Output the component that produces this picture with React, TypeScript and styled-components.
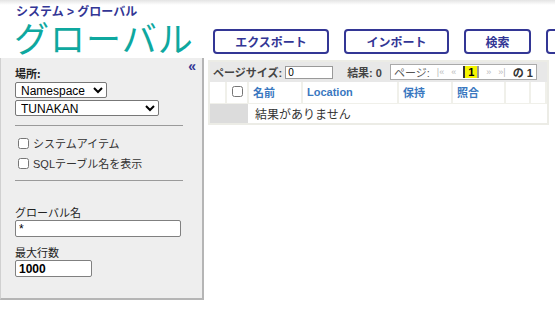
import React from 'react';
import styled, { createGlobalStyle } from 'styled-components';

const GlobalStyle = createGlobalStyle`
  html, body {
    margin: 0;
    padding: 0;
    background: #ffffff;
    font-family: "Liberation Sans", Arial, "Noto Sans CJK JP", sans-serif;
    overflow: hidden;
  }
`;

const navy = '#333695';

const Page = styled.div`
  width: 555px;
  height: 316px;
  position: relative;
  overflow: hidden;
`;

const Header = styled.div`
  height: 58px;
  display: flex;
  align-items: flex-start;
  background: linear-gradient(#e4e4e4 0px, #ffffff 5px);
  white-space: nowrap;
`;

const TitleBlock = styled.div`
  padding-left: 16px;
  width: 197px;
  flex-shrink: 0;
`;

const Crumb = styled.div`
  font-size: 12px;
  font-weight: bold;
  color: ${navy};
  line-height: 14px;
  margin-top: 5px;
`;

const Title = styled.h1`
  margin: 2px 0 0 -2px;
  font-size: 35px;
  font-weight: normal;
  line-height: 38px;
  color: #0ea89f;
  letter-spacing: 1px;
`;

const Buttons = styled.div`
  display: flex;
  gap: 15px;
  margin-top: 29px;
  flex-shrink: 0;
`;

const Btn = styled.button<{ w: number }>`
  width: ${(p) => p.w}px;
  height: 25px;
  border: 2px solid ${navy};
  border-radius: 4px;
  background: #fff;
  color: ${navy};
  font-family: "Liberation Sans", "Noto Sans CJK JP", sans-serif;
  font-size: 12px;
  font-weight: bold;
  padding: 0;
  flex-shrink: 0;
`;

const Main = styled.div`
  display: flex;
  align-items: flex-start;
`;

const Side = styled.div`
  width: 204px;
  height: 242px;
  box-sizing: border-box;
  background: #eeeeee;
  border-right: 2px solid #b5b5b5;
  border-bottom: 2px solid #b5b5b5;
  border-left: 1px solid #d0d0d0;
  padding: 9px 0 0 14px;
  position: relative;
  flex-shrink: 0;
`;

const Collapse = styled.span`
  position: absolute;
  right: 6px;
  top: 0px;
  font-size: 14px;
  font-weight: bold;
  color: ${navy};
`;

const Label = styled.div<{ bold?: boolean }>`
  font-size: 11px;
  font-weight: ${(p) => (p.bold ? 'bold' : 'normal')};
  color: #222;
  line-height: 13px;
  font-family: "Noto Sans CJK JP", sans-serif;
`;

const Select = styled.select<{ w: number }>`
  display: block;
  width: ${(p) => p.w}px;
  height: 16px;
  font-size: 12px;
  font-family: "Liberation Sans", Arial, sans-serif;
  border: 1px solid #777;
  border-radius: 2px;
  background: #fff;
  padding: 0 0 0 1px;
  margin-top: 2px;
  color: #000;
`;

const Rule = styled.div`
  width: 168px;
  height: 1px;
  background: #9a9a9a;
`;

const CheckRow = styled.label`
  display: flex;
  align-items: center;
  gap: 2px;
  font-size: 11px;
  color: #333;
  font-family: "Liberation Sans", "Noto Sans CJK JP", sans-serif;
  height: 20px;
`;

const Box = styled.input`
  width: 11px;
  height: 11px;
  margin: 0 2px 0 3px;
`;

const TextInput = styled.input<{ w: number; bold?: boolean }>`
  display: block;
  box-sizing: border-box;
  width: ${(p) => p.w}px;
  height: 17px;
  border: 1px solid #808080;
  border-radius: 2px;
  font-size: 12px;
  font-family: "Liberation Sans", Arial, sans-serif;
  font-weight: ${(p) => (p.bold ? 'bold' : 'normal')};
  padding: 0 3px;
  margin-top: 1px;
  background: #fff;
`;

const Content = styled.div`
  margin: 2px 0 0 4px;
  width: 341px;
  border: 2px solid #ecece6;
  box-sizing: border-box;
`;

const Toolbar = styled.div`
  height: 20px;
  background: #e8e8e8;
  display: flex;
  align-items: center;
  font-size: 11px;
  font-weight: bold;
  color: #444;
  font-family: "Liberation Sans", "Noto Sans CJK JP", sans-serif;
  padding-left: 3px;
  white-space: nowrap;
`;

const SmallInput = styled.input`
  width: 48px;
  height: 13px;
  box-sizing: border-box;
  border: 1px solid #999;
  font-size: 10px;
  padding: 0 2px;
  margin: 0 14px 0 3px;
`;

const Pager = styled.div`
  display: flex;
  align-items: center;
  gap: 7px;
  background: #fff;
  border: 1px solid #aaa;
  height: 14px;
  padding: 0 3px 0 3px;
  margin-left: 8px;
  font-weight: normal;
  color: #555;
`;

const PagerNav = styled.span<{ dim?: boolean }>`
  color: ${(p) => (p.dim ? '#bbb' : '#444')};
  font-size: 9px;
`;

const Current = styled.span`
  background: #f5f500;
  border-left: 2px solid #333;
  border-right: 2px solid #999;
  padding: 0 3px;
  font-weight: bold;
  color: #000;
  line-height: 12px;
`;

const Table = styled.table`
  border-collapse: collapse;
  table-layout: fixed;
  width: 100%;
  font-family: "Liberation Sans", "Noto Sans CJK JP", sans-serif;
  font-size: 11px;
`;

const Th = styled.th<{ w?: number; pad?: number }>`
  height: 21px;
  text-align: left;
  padding: 0 0 0 ${(p) => p.pad ?? 4}px;
  width: ${(p) => (p.w ? `${p.w}px` : 'auto')};
  color: #3a78c0;
  font-weight: bold;
  border-right: 2px solid #f0f0ea;
  border-bottom: 1px solid #f0f0ea;
  box-sizing: border-box;
`;

const Td = styled.td<{ gray?: boolean }>`
  height: 19px;
  padding: 0 7px;
  background: ${(p) => (p.gray ? '#dcdcdc' : '#fff')};
  color: #333;
  font-size: 12px;
`;

export default function App() {
  return (
    <Page>
      <GlobalStyle />
      <Header>
        <TitleBlock>
          <Crumb>システム &gt; グローバル</Crumb>
          <Title>グローバル</Title>
        </TitleBlock>
        <Buttons>
          <Btn w={116}>エクスポート</Btn>
          <Btn w={105}>インポート</Btn>
          <Btn w={67}>検索</Btn>
          <Btn w={60} aria-label="more" />
        </Buttons>
      </Header>
      <Main>
        <Side>
          <Collapse>«</Collapse>
          <Label bold>場所:</Label>
          <Select w={92}>
            <option>Namespace</option>
          </Select>
          <Select w={144}>
            <option>TUNAKAN</option>
          </Select>
          <div style={{ height: 9 }} />
          <Rule />
          <div style={{ height: 7 }} />
          <CheckRow>
            <Box type="checkbox" />
            システムアイテム
          </CheckRow>
          <CheckRow>
            <Box type="checkbox" />
            SQLテーブル名を表示
          </CheckRow>
          <div style={{ height: 7 }} />
          <Rule />
          <div style={{ height: 25 }} />
          <Label>グローバル名</Label>
          <TextInput w={166} defaultValue="*" />
          <div style={{ height: 9 }} />
          <Label>最大行数</Label>
          <TextInput w={77} bold defaultValue="1000" />
        </Side>
        <Content>
          <Toolbar>
            ページサイズ:
            <SmallInput defaultValue="0" />
            結果: 0
            <Pager>
              ページ:
              <PagerNav dim>|«</PagerNav>
              <PagerNav dim>«</PagerNav>
              <Current>1</Current>
              <PagerNav dim>»</PagerNav>
              <PagerNav dim>»|</PagerNav>
              <b style={{ color: '#333' }}>の 1</b>
            </Pager>
          </Toolbar>
          <Table>
            <thead>
              <tr>
                <Th w={16} pad={0} />
                <Th w={22} pad={5}>
                  <Box type="checkbox" style={{ margin: 0 }} />
                </Th>
                <Th w={54}>名前</Th>
                <Th w={96}>Location</Th>
                <Th w={54}>保持</Th>
                <Th w={53}>照合</Th>
                <Th w={25} />
                <Th />
              </tr>
            </thead>
            <tbody>
              <tr>
                <Td gray colSpan={2} />
                <Td colSpan={6}>結果がありません</Td>
              </tr>
            </tbody>
          </Table>
        </Content>
      </Main>
    </Page>
  );
}
